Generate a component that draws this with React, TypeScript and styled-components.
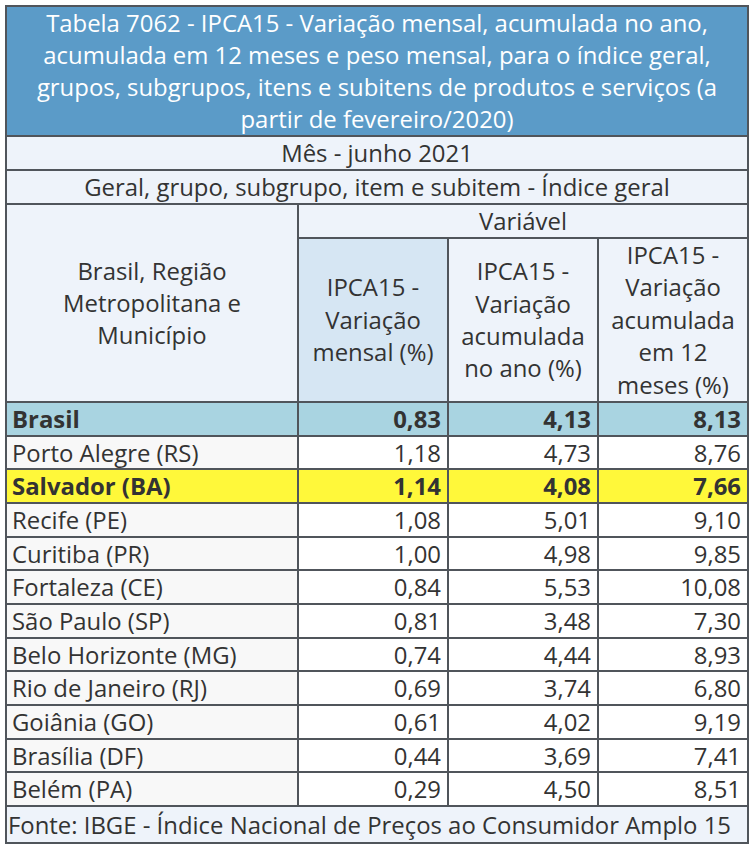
import React from 'react';
import styled, { createGlobalStyle } from 'styled-components';

const Global = createGlobalStyle`
  html, body { margin: 0; padding: 0; background: #ffffff; }
  body { font-family: "Open Sans", "Noto Sans", sans-serif; color: #333333; }
`;

const FONT = `"Open Sans", "Noto Sans", sans-serif`;

const Page = styled.div`
  padding: 5px 0 0 5px;
`;

const Table = styled.table`
  border-collapse: collapse;
  table-layout: fixed;
  width: 742px;
  font-family: ${FONT};
  font-size: 23.9px;
  color: #333333;
`;

const Cell = styled.td<{
  $bg?: string;
  $align?: 'left' | 'center' | 'right';
  $bold?: boolean;
  $lh?: string;
  $pad?: string;
}>`
  border: 2px solid #50555b;
  padding: ${(p) => p.$pad ?? '0 6px'};
  background: ${(p) => p.$bg ?? '#ffffff'};
  text-align: ${(p) => p.$align ?? 'center'};
  font-weight: ${(p) => (p.$bold ? 700 : 400)};
  line-height: ${(p) => p.$lh ?? '32px'};
  white-space: nowrap;
  overflow: hidden;
  vertical-align: middle;
`;

const TitleCell = styled(Cell)`
  background: #5b9bc8;
  color: #ffffff;
  line-height: 32px;
`;

type Row = { name: string; v: [string, string, string]; kind?: 'brasil' | 'salvador' };

const rows: Row[] = [
  { name: 'Brasil', v: ['0,83', '4,13', '8,13'], kind: 'brasil' },
  { name: 'Porto Alegre (RS)', v: ['1,18', '4,73', '8,76'] },
  { name: 'Salvador (BA)', v: ['1,14', '4,08', '7,66'], kind: 'salvador' },
  { name: 'Recife (PE)', v: ['1,08', '5,01', '9,10'] },
  { name: 'Curitiba (PR)', v: ['1,00', '4,98', '9,85'] },
  { name: 'Fortaleza (CE)', v: ['0,84', '5,53', '10,08'] },
  { name: 'São Paulo (SP)', v: ['0,81', '3,48', '7,30'] },
  { name: 'Belo Horizonte (MG)', v: ['0,74', '4,44', '8,93'] },
  { name: 'Rio de Janeiro (RJ)', v: ['0,69', '3,74', '6,80'] },
  { name: 'Goiânia (GO)', v: ['0,61', '4,02', '9,19'] },
  { name: 'Brasília (DF)', v: ['0,44', '3,69', '7,41'] },
  { name: 'Belém (PA)', v: ['0,29', '4,50', '8,51'] },
];

const LIGHT = '#eef3fa';
const rowBg = (k?: Row['kind']) =>
  k === 'brasil' ? '#a9d4e1' : k === 'salvador' ? '#fff83a' : undefined;

export default function App() {
  return (
    <Page>
      <Global />
      <Table>
        <colgroup>
          <col style={{ width: 292 }} />
          <col style={{ width: 150 }} />
          <col style={{ width: 150 }} />
          <col style={{ width: 150 }} />
        </colgroup>
        <tbody>
          <tr>
            <TitleCell colSpan={4}>
              Tabela 7062 - IPCA15 - Variação mensal, acumulada no ano,
              <br />
              acumulada em 12 meses e peso mensal, para o índice geral,
              <br />
              grupos, subgrupos, itens e subitens de produtos e serviços (a
              <br />
              partir de fevereiro/2020)
            </TitleCell>
          </tr>
          <tr>
            <Cell colSpan={4} $bg={LIGHT}>Mês - junho 2021</Cell>
          </tr>
          <tr>
            <Cell colSpan={4} $bg={LIGHT}>Geral, grupo, subgrupo, item e subitem - Índice geral</Cell>
          </tr>
          <tr>
            <Cell rowSpan={2} $bg={LIGHT}>
              Brasil, Região
              <br />
              Metropolitana e
              <br />
              Município
            </Cell>
            <Cell colSpan={3} $bg={LIGHT}>Variável</Cell>
          </tr>
          <tr>
            <Cell $bg="#d6e6f3" $lh="32.4px">
              IPCA15 -<br />Variação<br />mensal (%)
            </Cell>
            <Cell $bg={LIGHT} $lh="32.4px">
              IPCA15 -<br />Variação<br />acumulada<br />no ano (%)
            </Cell>
            <Cell $bg={LIGHT} $lh="32.4px">
              IPCA15 -<br />Variação<br />acumulada<br />em 12<br />meses (%)
            </Cell>
          </tr>
          {rows.map((r) => (
            <tr key={r.name}>
              <Cell
                $align="left"
                $bg={rowBg(r.kind) ?? '#f8f8f8'}
                $bold={!!r.kind}
                $lh="31.67px"
                $pad="0 5px"
              >
                {r.name}
              </Cell>
              {r.v.map((v, i) => (
                <Cell key={i} $align="right" $bg={rowBg(r.kind)} $bold={!!r.kind} $lh="31.67px">
                  {v}
                </Cell>
              ))}
            </tr>
          ))}
          <tr>
            <Cell colSpan={4} $align="left" $bg={LIGHT} $lh="35px" $pad="0 1px">
              Fonte: IBGE - Índice Nacional de Preços ao Consumidor Amplo 15
            </Cell>
          </tr>
        </tbody>
      </Table>
    </Page>
  );
}
